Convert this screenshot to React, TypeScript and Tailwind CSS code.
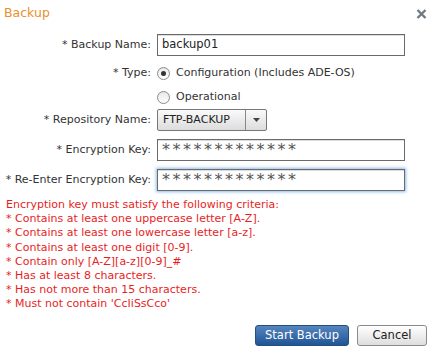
import React from "react";

const font = { fontFamily: "Tahoma, 'DejaVu Sans', sans-serif" };

function Label({ children }: { children: React.ReactNode }) {
  return (
    <div className="w-[157px] shrink-0 whitespace-nowrap pr-[6px] text-right text-[11px] text-[#333]">{children}</div>
  );
}

function Radio({ checked }: { checked?: boolean }) {
  return (
    <span className="flex h-[13px] w-[13px] items-center justify-center rounded-full border border-[#8a8a8a] bg-gradient-to-b from-[#e8e8e8] to-white">
      {checked && <span className="h-[5px] w-[5px] rounded-full bg-[#333]" />}
    </span>
  );
}

export default function App() {
  const criteria = [
    "Encryption key must satisfy the following criteria:",
    "* Contains at least one uppercase letter [A-Z].",
    "* Contains at least one lowercase letter [a-z].",
    "* Contains at least one digit [0-9].",
    "* Contain only [A-Z][a-z][0-9]_#",
    "* Has at least 8 characters.",
    "* Has not more than 15 characters.",
    "* Must not contain 'CcIiSsCco'",
  ];
  return (
    <div className="relative h-[348px] w-[436px] bg-white" style={font}>
      <div className="flex h-[27px] items-center justify-between pl-[4px] pr-[9px]">
        <span className="text-[12.5px] text-[#e8902a]">Backup</span>
        <svg width="11" height="10" viewBox="0 0 11 10">
          <path d="M1.5 1 L9.5 9 M9.5 1 L1.5 9" stroke="#6f7a84" strokeWidth="2.4" strokeLinecap="butt" />
        </svg>
      </div>

      <div className="mt-[7px] flex items-center">
        <Label>* Backup Name:</Label>
        <div className="flex h-[22px] w-[248px] items-center border border-[#6a6a6a] px-[4px] text-[11.5px] text-[#222] shadow-[inset_0_1px_0_#ddd]">
          backup01
        </div>
      </div>

      <div className="mt-[6px] flex h-[22px] items-center">
        <Label>* Type:</Label>
        <div className="flex items-center gap-[6px] text-[11px] text-[#333]">
          <Radio checked />
          <span>Configuration (Includes ADE-OS)</span>
        </div>
      </div>

      <div className="mt-[2px] flex h-[22px] items-center">
        <div className="w-[157px] shrink-0" />
        <div className="flex items-center gap-[6px] text-[11px] text-[#333]">
          <Radio />
          <span>Operational</span>
        </div>
      </div>

      <div className="mt-[1px] flex items-center">
        <Label>* Repository Name:</Label>
        <div className="flex h-[22px] w-[110px] items-stretch rounded-[2px] border border-[#777] bg-gradient-to-b from-[#fafafa] to-[#dcdcdc] text-[11px] text-[#222]">
          <div className="flex flex-1 items-center pl-[5px]">FTP-BACKUP</div>
          <div className="flex w-[21px] items-center justify-center border-l border-[#888]">
            <svg width="7" height="4" viewBox="0 0 7 4">
              <path d="M0 0 L7 0 L3.5 4 Z" fill="#444" />
            </svg>
          </div>
        </div>
      </div>

      <div className="mt-[8px] flex items-center">
        <Label>* Encryption Key:</Label>
        <div className="flex h-[22px] w-[248px] items-start border border-[#6a6a6a] px-[4px] pt-[1px] text-[16px] leading-[18px] tracking-[2.5px] text-[#555] shadow-[inset_0_1px_0_#ddd]">
          *************
        </div>
      </div>

      <div className="mt-[8px] flex items-center">
        <Label>* Re-Enter Encryption Key:</Label>
        <div className="flex h-[22px] w-[248px] items-start border border-[#6a6a6a] px-[4px] pt-[1px] text-[16px] leading-[18px] tracking-[2.5px] text-[#555] shadow-[0_0_3px_1px_#8cbcec,inset_0_1px_0_#ddd]">
          *************
        </div>
      </div>

      <div className="mt-[7px] pl-[6px] text-[11px] leading-[14.2px] text-[#e81e1e]">
        {criteria.map((c) => (
          <div key={c}>{c}</div>
        ))}
      </div>

      <div className="mt-[13px] flex justify-end gap-[8px] pr-[9px]">
        <button className="h-[21px] w-[94px] rounded-[3px] border border-[#24507f] bg-gradient-to-b from-[#5585bd] to-[#1f5596] text-[11.5px] text-white">
          Start Backup
        </button>
        <button className="h-[21px] w-[70px] rounded-[3px] border border-[#8a8a8a] bg-gradient-to-b from-white to-[#dedede] text-[11.5px] text-[#222]">
          Cancel
        </button>
      </div>
    </div>
  );
}
